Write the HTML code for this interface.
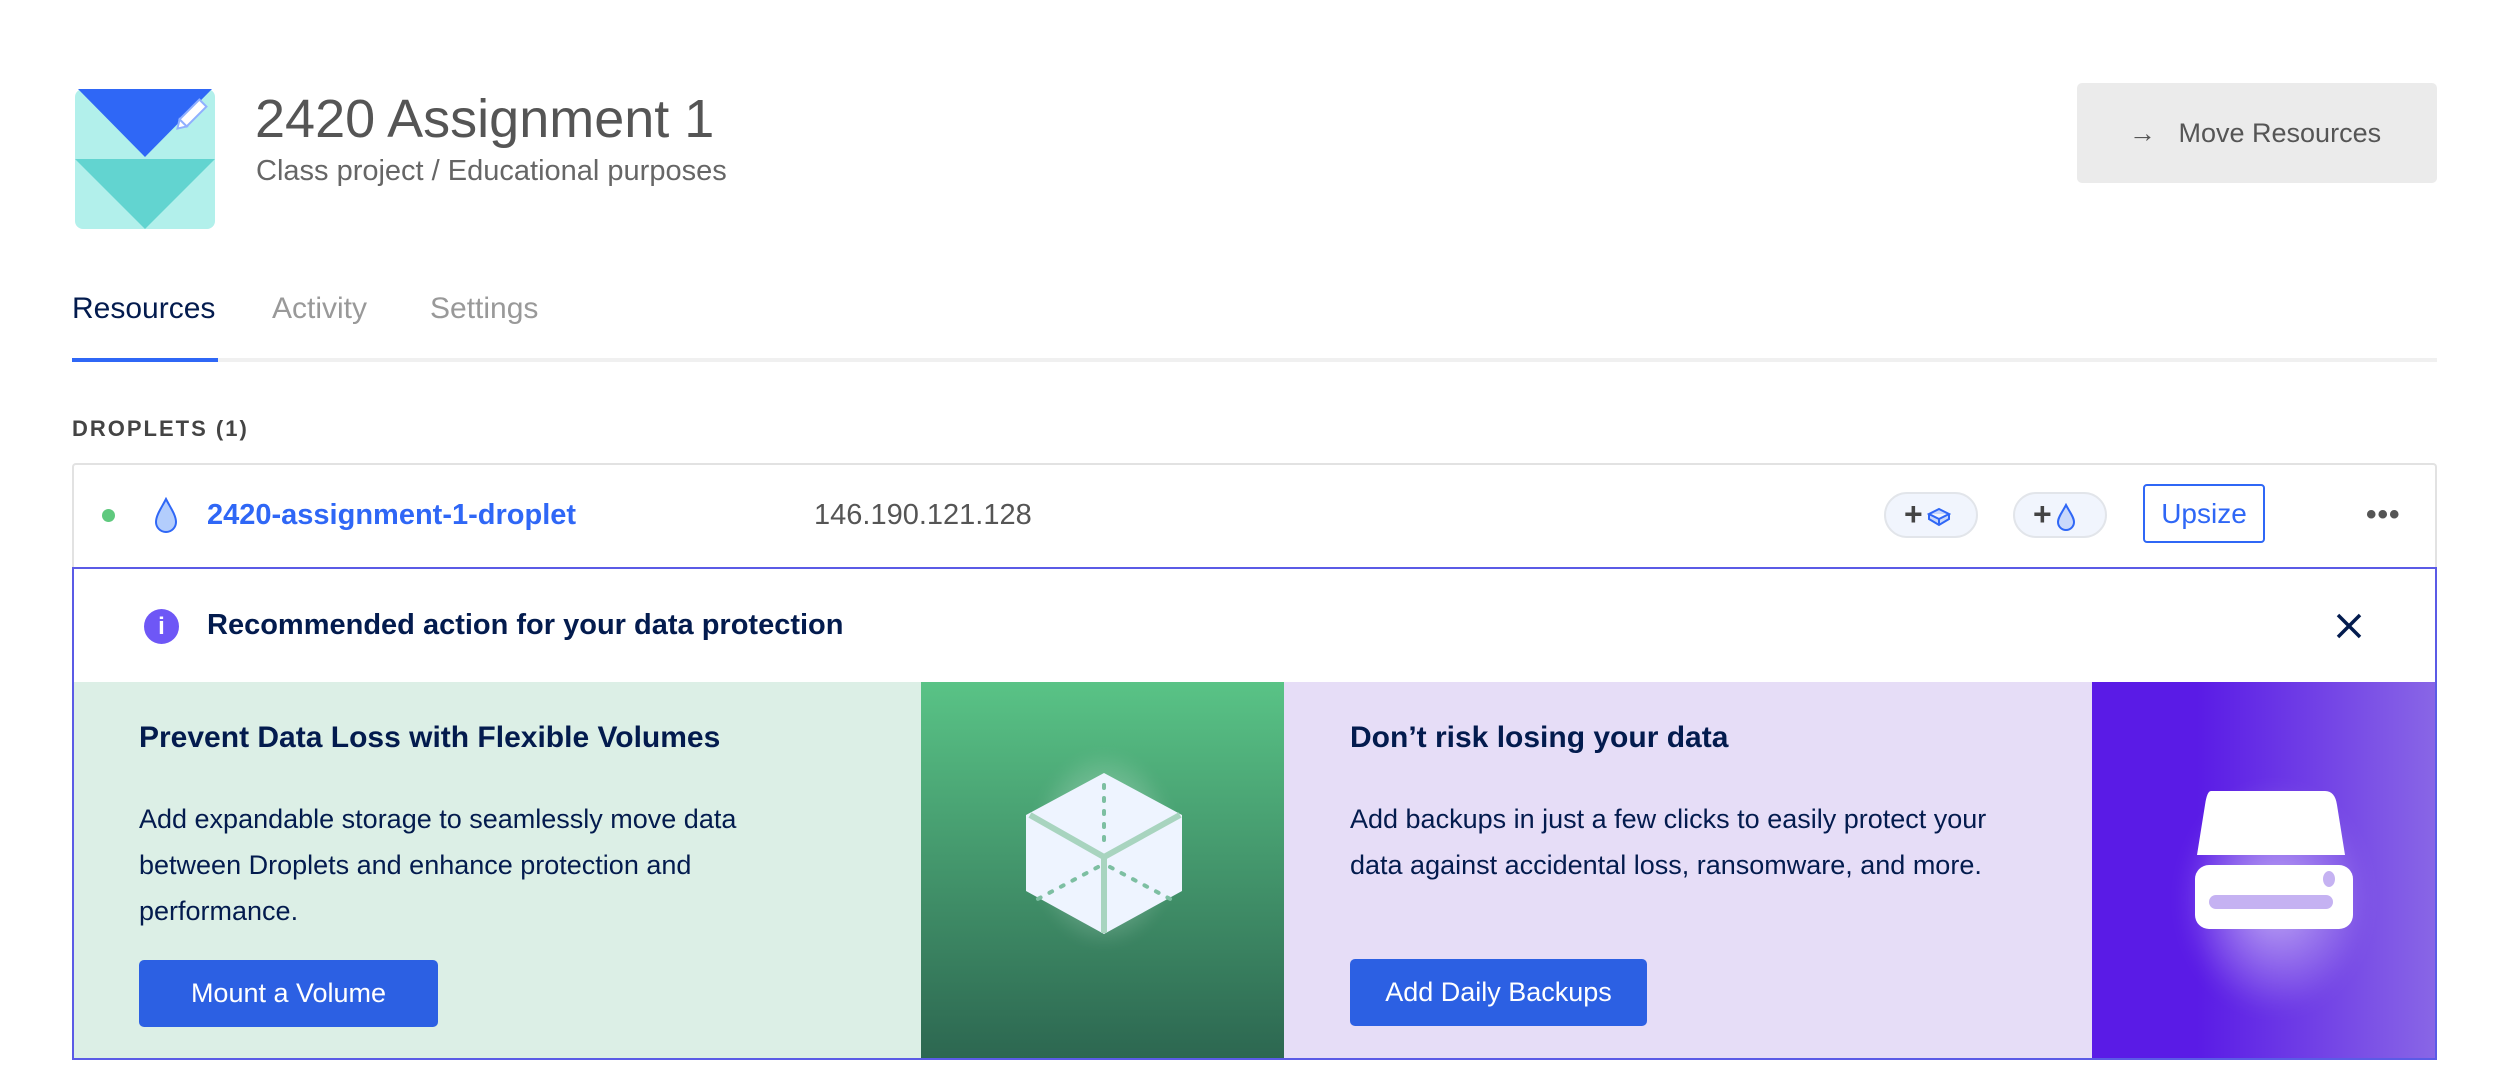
<!DOCTYPE html>
<html><head><meta charset="utf-8"><style>
*{box-sizing:border-box;margin:0;padding:0}
body{width:2498px;height:1090px;background:#fff;font-family:"Liberation Sans",sans-serif;position:relative;overflow:hidden;color:#031b4e}
.a{position:absolute;white-space:nowrap}
</style></head><body>
<svg class="a" style="left:75px;top:89px" width="140" height="140" viewBox="0 0 140 140">
<rect width="140" height="140" rx="8" fill="#b2f0eb"/>
<polygon points="0,70 140,70 70,140" fill="#62d4d0"/>
<polygon points="3,0 137,0 70,68" fill="#2f67f6"/>
<g transform="translate(118,24) rotate(45)" fill="#fff" stroke="#8fb0ff" stroke-width="2"><rect x="-5" y="-14" width="10" height="28"/><polygon points="-5,14 5,14 0,22"/></g>
</svg>
<div class="a" style="left:255px;top:88px;font-size:54px;color:#555">2420 Assignment 1</div>
<div class="a" style="left:256px;top:155px;font-size:29px;color:#666">Class project / Educational purposes</div>
<div class="a" style="left:2077px;top:83px;width:360px;height:100px;background:#ebebeb;border-radius:5px;font-size:27px;color:#555;line-height:100px;padding-left:52px">→&nbsp;&nbsp;&nbsp;Move Resources</div>
<div class="a" style="left:72px;top:292px;font-size:30px;color:#031b4e">Resources</div>
<div class="a" style="left:272px;top:292px;font-size:30px;color:#999">Activity</div>
<div class="a" style="left:430px;top:292px;font-size:30px;color:#999">Settings</div>
<div class="a" style="left:72px;top:358px;width:2365px;height:4px;background:#f0f0f0"></div>
<div class="a" style="left:72px;top:358px;width:146px;height:4px;background:#2f67f6"></div>
<div class="a" style="left:72px;top:416px;font-size:22px;font-weight:bold;color:#444;letter-spacing:2px">DROPLETS (1)</div>
<div class="a" style="left:72px;top:463px;width:2365px;height:106px;border:2px solid #e2e2e2;border-bottom:none;border-radius:4px 4px 0 0"></div>
<div class="a" style="left:102px;top:509px;width:13px;height:13px;border-radius:50%;background:#5fc97e"></div>
<svg class="a" style="left:154px;top:497px" width="24" height="36" viewBox="0 0 24 36"><path d="M12 2 C8 10 2 18 2 25 a10 10 0 0 0 20 0 C22 18 16 10 12 2Z" fill="#b3cdfc" stroke="#2f67f6" stroke-width="2"/></svg>
<div class="a" style="left:207px;top:499px;font-size:29px;font-weight:bold;color:#2f67f6">2420-assignment-1-droplet</div>
<div class="a" style="left:814px;top:499px;font-size:29px;color:#555">146.190.121.128</div>
<div class="a" style="left:1884px;top:492px;width:94px;height:46px;border:2px solid #e2e5ea;border-radius:23px;background:#f1f5fd;font-size:32px;color:#444;line-height:40px;padding-left:18px;font-weight:bold">+<svg style="vertical-align:middle;margin-left:4px" width="24" height="20" viewBox="0 0 24 20"><path d="M12 2 L22 7 L12 12 L2 7Z M2 7 V12 L12 18 L22 12 V7 M12 12 V18" fill="#c9d8fb" stroke="#2f67f6" stroke-width="2"/></svg></div>
<div class="a" style="left:2013px;top:492px;width:94px;height:46px;border:2px solid #e2e5ea;border-radius:23px;background:#f1f5fd;font-size:32px;color:#444;line-height:40px;padding-left:18px;font-weight:bold">+<svg style="vertical-align:middle;margin-left:4px" width="20" height="28" viewBox="0 0 20 28"><path d="M10 2 C7 8 2 14 2 19 a8 8 0 0 0 16 0 C18 14 13 8 10 2Z" fill="#c9d8fb" stroke="#2f67f6" stroke-width="2"/></svg></div>
<div class="a" style="left:2143px;top:484px;width:122px;height:59px;border:2px solid #2f67f6;border-radius:4px;font-size:28px;color:#2f67f6;line-height:55px;text-align:center">Upsize</div>
<div class="a" style="left:2366px;top:498px;font-size:30px;color:#555;font-weight:bold;letter-spacing:1px">•••</div>
<div class="a" style="left:72px;top:567px;width:2365px;height:493px;border:2px solid #5b5be6;background:#fff;overflow:hidden">
 <div class="a" style="left:70px;top:40px;width:35px;height:35px;border-radius:50%;background:#6e57f6;color:#fff;font-size:24px;font-weight:bold;text-align:center;line-height:35px">i</div>
 <div class="a" style="left:133px;top:40px;font-size:29px;font-weight:bold;color:#031b4e">Recommended action for your data protection</div>
 <svg class="a" style="left:2262px;top:44px" width="26" height="26" viewBox="0 0 26 26"><path d="M2 2 L24 24 M24 2 L2 24" stroke="#031b4e" stroke-width="3.5"/></svg>
 <div class="a" style="left:0;top:113px;width:847px;height:380px;background:#dcefe6"></div>
 <div class="a" style="left:847px;top:113px;width:363px;height:380px;background:linear-gradient(#59c386,#2c6650)"></div>
 <div class="a" style="left:1210px;top:113px;width:808px;height:380px;background:#e6ddf7"></div>
 <div class="a" style="left:2018px;top:113px;width:350px;height:380px;background:linear-gradient(90deg,#5a1be6 30%,#8a68e6)"></div>
 <div class="a" style="left:65px;top:152px;font-size:30px;font-weight:bold;color:#031b4e">Prevent Data Loss with Flexible Volumes</div>
 <div class="a" style="left:65px;top:227px;font-size:27px;line-height:46px;color:#031b4e">Add expandable storage to seamlessly move data<br>between Droplets and enhance protection and<br>performance.</div>
 <div class="a" style="left:65px;top:391px;width:299px;height:67px;background:#2c60e3;border-radius:5px;color:#fff;font-size:27px;line-height:67px;text-align:center">Mount a Volume</div>
 <div class="a" style="left:1276px;top:152px;font-size:30px;font-weight:bold;color:#031b4e">Don’t risk losing your data</div>
 <div class="a" style="left:1276px;top:227px;font-size:27px;line-height:46px;color:#031b4e">Add backups in just a few clicks to easily protect your<br>data against accidental loss, ransomware, and more.</div>
 <div class="a" style="left:1276px;top:390px;width:297px;height:67px;background:#2c60e3;border-radius:5px;color:#fff;font-size:27px;line-height:67px;text-align:center">Add Daily Backups</div>
 <div class="a" style="left:955px;top:180px;width:150px;height:200px;border-radius:50%;background:radial-gradient(rgba(255,255,255,.6),rgba(255,255,255,0) 70%);filter:blur(6px)"></div>
 <svg class="a" style="left:948px;top:202px" width="165" height="165" viewBox="0 0 165 165">
  <polygon points="82,2 160,44 160,120 82,163 4,120 4,44" fill="#eef4ff"/>
  <path d="M8 44 L82 86 L158 44 M82 86 V162" stroke="#a8d4bf" stroke-width="6" fill="none"/>
  <path d="M82 14 V78 M76 96 L12 130 M88 96 L152 130" stroke="#7dbfa2" stroke-width="4" stroke-dasharray="3 10" stroke-linecap="round" fill="none"/>
 </svg>
 <div class="a" style="left:2105px;top:215px;width:190px;height:230px;border-radius:40%;background:radial-gradient(rgba(255,255,255,.6),rgba(255,255,255,0) 70%);filter:blur(10px)"></div>
 <svg class="a" style="left:2115px;top:222px" width="170" height="140" viewBox="0 0 170 140">
  <path d="M22 0 H136 Q146 0 148 14 L156 64 H8 L16 14 Q18 0 22 0Z" fill="#fff"/>
  <rect x="6" y="74" width="158" height="64" rx="14" fill="#fff"/>
  <rect x="20" y="104" width="124" height="14" rx="7" fill="#c5b2f2"/>
  <ellipse cx="140" cy="88" rx="6" ry="8" fill="#c5b2f2"/>
 </svg>
</div>
</body></html>
